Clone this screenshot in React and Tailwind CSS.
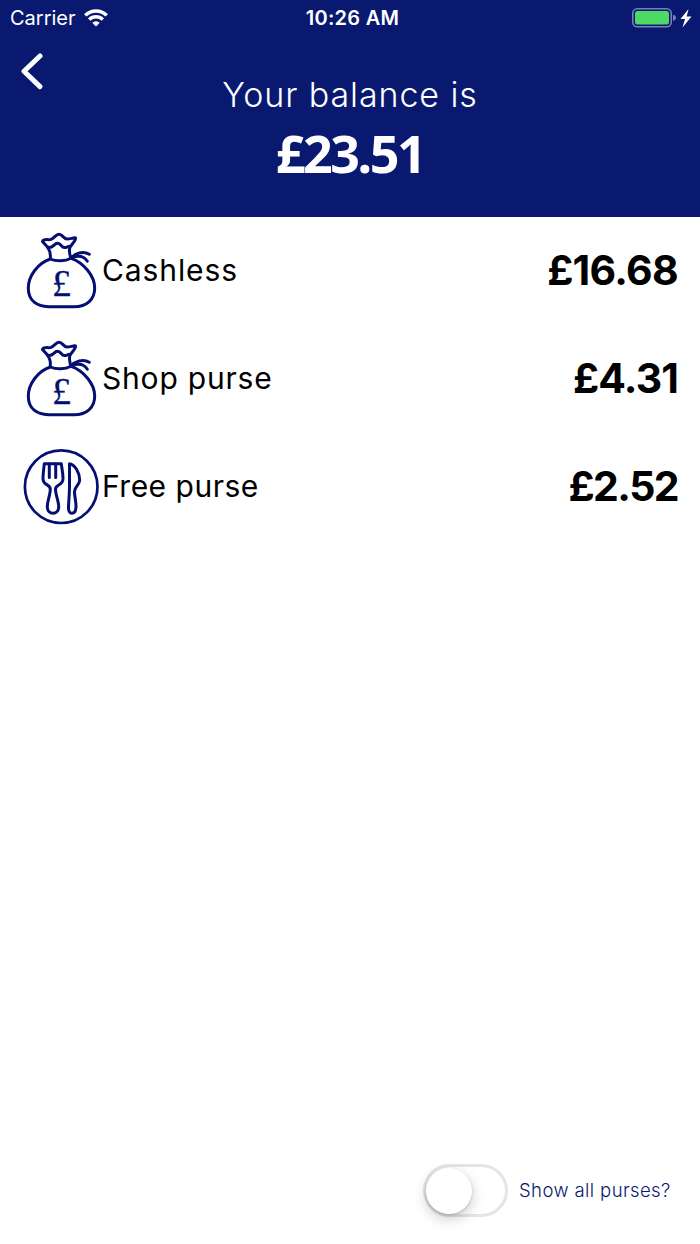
import { useState } from "react";

const purses = [
	{ name: "Cashless", amount: "£16.68", icon: "bag", nameClass: "tracking-[0.9px]", amountClass: "tracking-[-0.7px]" },
	{ name: "Shop purse", amount: "£4.31", icon: "bag", nameClass: "tracking-[0.8px]", amountClass: "tracking-[-0.9px]" },
	{ name: "Free purse", amount: "£2.52", icon: "food", nameClass: "tracking-[0.5px]", amountClass: "tracking-[-1.6px]" },
];

const App = () => {
	const [showAll, setShowAll] = useState(false);

	return (
		<div className="flex h-[1244px] w-[700px] flex-col bg-white font-['Inter',sans-serif] text-black">
			<header className="h-[217px] bg-[#091970] text-white">
				<StatusBar />
				<div className="flex">
					<button className="mt-[16px] ml-[20px] h-[38px] w-[24px]" aria-label="Back">
						<svg viewBox="0 0 24 38" className="h-[38px] w-[24px]" fill="none" stroke="currentColor" strokeWidth="5" strokeLinecap="round" strokeLinejoin="round">
							<path d="M20 4 4 19.300 20 34.600" />
						</svg>
					</button>
					<div className="mr-[44px] flex-1 pt-[37px] text-center whitespace-nowrap">
						<p className="text-[34px] leading-[44px] font-light tracking-[0.9px]">Your balance is</p>
						<p className="mt-[6px] font-['Noto_Sans',sans-serif] text-[52px] leading-[60px] font-bold tracking-[-2.5px]">£23.51</p>
					</div>
				</div>
			</header>
			<main className="flex-1">
				{purses.map((item) => {
					return <PurseRow purse={item} key={item.name} />
				})}
			</main>
			<footer className="mb-[27px] flex items-center pl-[423px]">
				<Toggle checked={showAll} onChange={() => setShowAll(!showAll)} />
				<span className="ml-[11px] text-[18.5px] font-light tracking-[0.4px] whitespace-nowrap text-[#091970]">Show all purses?</span>
			</footer>
		</div>
	)
}

const StatusBar = () => {
	return (
		<div className="grid h-[36px] grid-cols-3 items-center pr-[8px] pl-[10px] text-[20px] whitespace-nowrap">
			<div className="flex items-center gap-[8px]">
				<span>Carrier</span>
				<svg viewBox="0 0 24 18" className="h-[18px] w-[24px]" fill="none" stroke="currentColor" strokeWidth="3.4">
					<path d="M1.3 6.4a15.2 15.2 0 0 1 21.4 0" />
					<path d="M5.2 10.6a9.7 9.7 0 0 1 13.6 0" />
					<path d="M12 17.5 8.3 13.8a5.2 5.2 0 0 1 7.4 0z" fill="currentColor" stroke="none" />
				</svg>
			</div>
			<span className="pl-[3px] text-center font-semibold tracking-[0.3px]">10:26 AM</span>
			<svg viewBox="0 0 60 22" className="h-[22px] w-[60px] justify-self-end" fill="none">
				<rect x="0.8" y="1.800" width="38.4" height="18" rx="4.5" stroke="#7880b5" strokeWidth="1.6" />
				<rect x="3" y="4" width="34" height="13.600" rx="2.500" fill="#4cd964" />
				<path d="M41 7.800q3 .6 3 3t-3 3z" fill="#7880b5" />
				<path d="M56.500 2 48.500 12h4.500l-2.500 8.500L59.500 9.500h-4.800z" fill="white" />
			</svg>
		</div>
	)
}

const PurseRow = ({ purse }) => {
	return (
		<div className="flex h-[108px] items-center px-[22px] whitespace-nowrap">
			{purse.icon === "bag" ? <BagIcon /> : <FoodIcon />}
			<span className={`mb-[2px] ml-[2px] text-[30px] ${purse.nameClass}`}>{purse.name}</span>
			<span className={`ml-auto text-[41px] font-bold ${purse.amountClass}`}>{purse.amount}</span>
		</div>
	)
}

const BagIcon = () => {
	return (
		<svg viewBox="0 0 78 78" className="size-[78px] shrink-0" fill="none" stroke="#050f72" strokeWidth="3" strokeLinecap="round" strokeLinejoin="round">
			<path d="M28.3 27C16 31 6.3 44 6.3 56c0 13 9 18.7 20 18.700h26c12 0 20.400-6.700 20.400-18.700 0-12-11-25.500-23.700-29.700-6 3.200-15 3.200-20.700.7z" />
			<path d="M28.300 26.500c.5-5-.6-8.500-2.600-11.200L20.500 9.500c.5-2.800 5.500-1.500 8-2 4-1 5-5.200 8.500-5.200s4.500 4.500 8 4.800c3 .2 7-2 8.500-1.200.8 3-4.500 6.500-5.800 10.200-1 3.500.3 6.500 1 9.500" />
			<path d="M25.700 15.300c5.500 1.500 6-4 9.800-4s3.500 4 7 4.300c2 .1 3.500-1.300 5-1.300" />
			<path d="M49 26c4-4.500 12-7.500 18.300-3.700M50 25.500c6-2 12-1.500 15.300 3.700" />
			<text x="39.500" y="64" textAnchor="middle" fill="#050f72" strokeWidth="0.3" className="font-['Liberation_Serif',serif] text-[38px]">£</text>
		</svg>
	)
}

const FoodIcon = () => {
	return (
		<svg viewBox="0 0 78 78" className="size-[78px] shrink-0" fill="none" stroke="#050f72" strokeWidth="3" strokeLinecap="round" strokeLinejoin="round">
			<circle cx="39.2" cy="38.7" r="36.3" strokeWidth="2.7" />
			<path d="M22.300 15.700h17c.6 5 1.800 9.800 1.700 15 0 7-7.500 5.500-7.500 10.300 0 6 3.200 12 3.200 17.500 0 4.500-2.500 6.800-5.700 6.800s-5.700-2.300-5.700-6.800c0-5.500 3-11.500 3-17.500 0-4.800-7.300-3.500-7.300-10.300 0-5.200.8-10 1.300-15z" />
			<path d="M27.300 16v13.500M33.700 16v13.500" />
			<path d="M47.500 15.700c5.500 1 10.200 9 10.200 16.300 0 5.500-5.200 6.500-5.200 11.500 0 5 1.500 9.500 1.500 14.500s-1.500 7.300-4 7.300-3.700-2.300-3.500-6.800c.3-6 1-14.300 1-20.800z" />
		</svg>
	)
}

const Toggle = ({ checked, onChange }) => {
	return (
		<button role="switch" aria-checked={checked} aria-label="Show all purses" onClick={onChange} className="flex h-[53px] w-[85px] items-center rounded-full border-3 border-[#e5e5e5] bg-white">
			<span className={`size-[46px] rounded-full bg-white shadow-[0_5px_14px_rgba(0,0,0,0.2),0_1px_3px_rgba(0,0,0,0.16)] ${checked ? "ml-auto" : ""}`}></span>
		</button>
	)
}

export default App;
